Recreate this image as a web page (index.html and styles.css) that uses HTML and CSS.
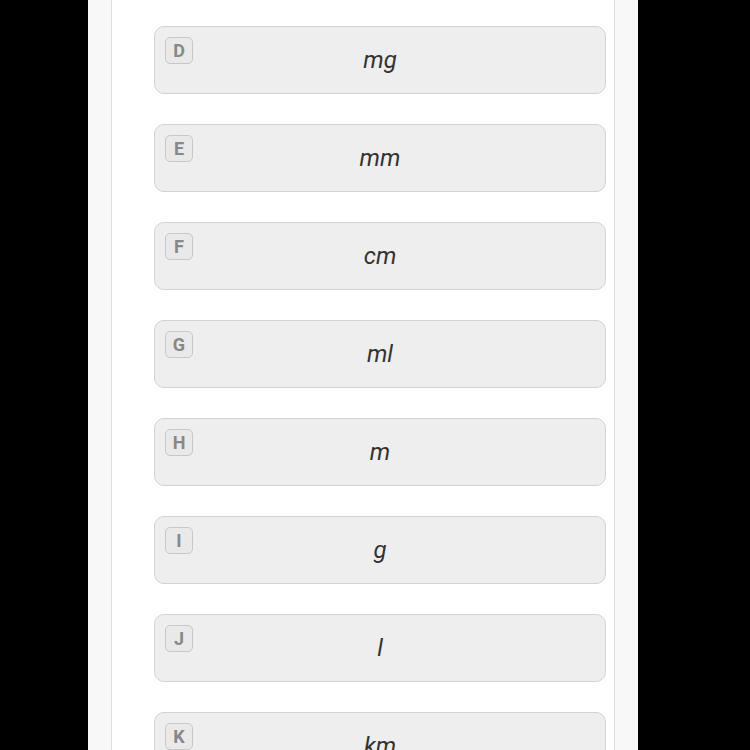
FILE: index.html
```html
<!DOCTYPE html>
<html>
<head>
<meta charset="utf-8">
<link rel="stylesheet" href="styles.css">
</head>
<body>
<div class="panel">
  <div class="inner">
    <div class="card"><span class="badge">D</span><span class="label">mg</span></div>
    <div class="card"><span class="badge">E</span><span class="label">mm</span></div>
    <div class="card"><span class="badge">F</span><span class="label">cm</span></div>
    <div class="card"><span class="badge">G</span><span class="label">ml</span></div>
    <div class="card"><span class="badge">H</span><span class="label">m</span></div>
    <div class="card"><span class="badge">I</span><span class="label">g</span></div>
    <div class="card"><span class="badge">J</span><span class="label">l</span></div>
    <div class="card"><span class="badge">K</span><span class="label">km</span></div>
  </div>
</div>
</body>
</html>
```

FILE: styles.css
```css
html, body {
  margin: 0;
  padding: 0;
  background: #000;
  height: 750px;
  overflow: hidden;
}
.panel {
  width: 550px;
  margin-left: 88px;
  height: 750px;
  box-sizing: border-box;
  background: #f8f8f8;
  padding: 0 23px;
}
.inner {
  height: 100%;
  box-sizing: border-box;
  background: #fff;
  border-left: 1px solid #dcdcdc;
  border-right: 1px solid #dcdcdc;
  padding: 26px 8px 0 42px;
  display: flex;
  flex-direction: column;
  gap: 30px;
}
.card {
  position: relative;
  flex: 0 0 68px;
  box-sizing: border-box;
  background: #eeeeee;
  border: 1px solid #d2d2d2;
  border-radius: 10px;
  display: flex;
  align-items: center;
  justify-content: center;
}
.badge {
  position: absolute;
  top: 10px;
  left: 10px;
  width: 28px;
  height: 27px;
  box-sizing: border-box;
  border: 1px solid #c8c8c8;
  border-radius: 5px;
  background: #e9e9e9;
  color: #888;
  font-family: Roboto, "Liberation Sans", sans-serif;
  font-weight: 700;
  font-size: 18px;
  display: flex;
  align-items: center;
  justify-content: center;
}
.label {
  font-family: Roboto, "Liberation Sans", sans-serif;
  font-style: italic;
  font-size: 24px;
  color: #333;
}
```
